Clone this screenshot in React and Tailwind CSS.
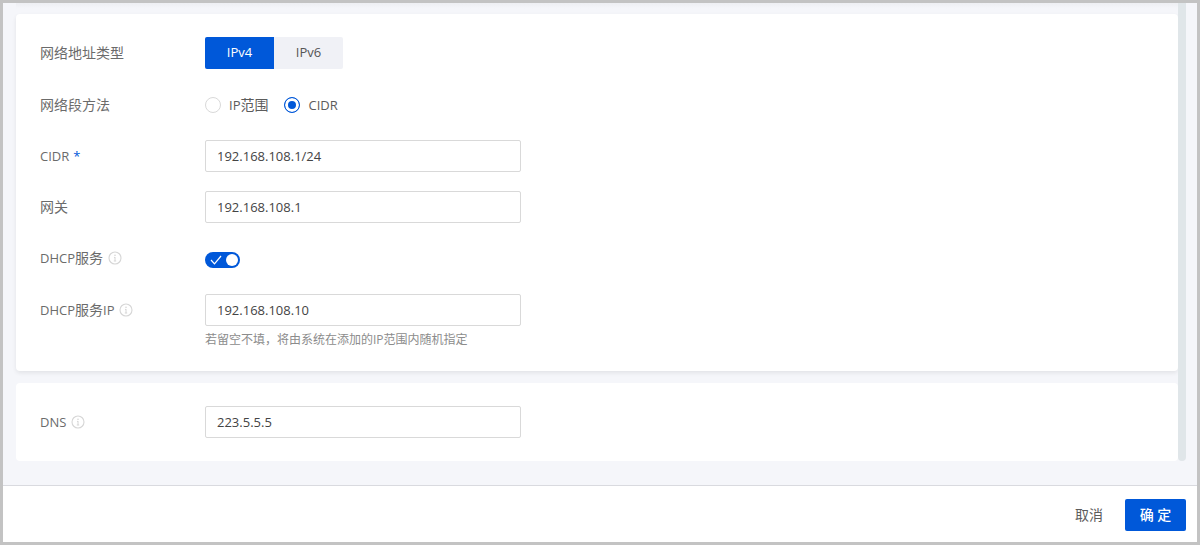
import React from 'react';

// Latin runs are set one step smaller than the Chinese text round them
function Latin({ children }) {
  return <span className="text-[13px]">{children}</span>;
}

function InfoIcon() {
  return (
    <svg viewBox="0 0 14 14" className="ml-[5px] w-3.5 h-3.5 shrink-0" fill="none" stroke="#d6d6d6" aria-hidden="true">
      <circle cx="7" cy="7" r="6" strokeWidth="1.1" />
      <path d="M7 6v4M6 6.4h1M5.8 10h2.4" strokeWidth="1" />
      <circle cx="7" cy="4.2" r="0.7" fill="#cccccc" stroke="none" />
    </svg>
  );
}

function Card({ children }) {
  return (
    <section className="rounded-sm bg-white px-6 shadow-[0_2px_4px_rgba(0,0,0,0.08)]">{children}</section>
  );
}

function Field({ id, label, info, required, className = '', children }) {
  return (
    <div className={`flex items-start ${className}`}>
      <div className="flex h-8 w-[165px] shrink-0 items-center text-[#6b6b6b]">
        <label htmlFor={id}>
          {label}
          {required && <span className="ml-1 text-[13px] text-[#0058d9]">*</span>}
        </label>
        {info && <InfoIcon />}
      </div>
      <div className="min-w-0 flex-1">{children}</div>
    </div>
  );
}

function TextInput({ id, value, onChange }) {
  return (
    <input id={id} type="text" value={value} onChange={(e) => onChange(e.target.value)}
      className="block h-8 w-full max-w-[316px] rounded-xs border border-[#d9d9d9] bg-white px-[11px] text-[13px] text-[#444] outline-none focus:border-[#0058d9]" />
  );
}

function TypeTabs({ value, onChange }) {
  return (
    <div className="inline-flex h-8 overflow-hidden rounded-xs bg-[#f0f1f6]" role="group" aria-label="网络地址类型">
      {['IPv4', 'IPv6'].map((t) => (
        <button key={t} type="button" aria-pressed={value === t} onClick={() => onChange(t)}
          className={`w-[69px] pb-0.5 text-[13px] ${value === t ? 'bg-[#0058d9] text-white' : 'text-[#555]'}`}>
          {t}
        </button>
      ))}
    </div>
  );
}

function Radio({ value, checked, onChange, children }) {
  return (
    <label className="flex items-center gap-2 text-[#5c5c5c]">
      <input type="radio" name="method" value={value} checked={checked} onChange={() => onChange(value)}
        className="h-4 w-4 appearance-none rounded-full border border-[#d9d9d9] bg-white checked:border-[#0058d9] checked:bg-[#0058d9] checked:shadow-[inset_0_0_0_3px_white]" />
      <span>{children}</span>
    </label>
  );
}

function Switch({ id, checked, onChange }) {
  return (
    <button id={id} type="button" role="switch" aria-checked={checked} onClick={() => onChange(!checked)}
      className={`flex h-4 w-[35px] items-center rounded-full px-0.5 ${checked ? 'justify-between bg-[#0058d9]' : 'justify-start bg-[#c3c3c3]'}`}>
      {checked && (
        <svg viewBox="0 0 12 10" className="ml-[3px] h-2.5 w-3" fill="none" stroke="white" strokeWidth="1.2" aria-hidden="true">
          <path d="M1 5l3.5 3.8L11 1" />
        </svg>
      )}
      <span className="h-3 w-3 rounded-full bg-white" />
    </button>
  );
}

export default function App() {
  const [type, setType] = React.useState('IPv4');
  const [method, setMethod] = React.useState('cidr');
  const [cidr, setCidr] = React.useState('192.168.108.1/24');
  const [gateway, setGateway] = React.useState('192.168.108.1');
  const [dhcp, setDhcp] = React.useState(true);
  const [dhcpIp, setDhcpIp] = React.useState('192.168.108.10');
  const [dns, setDns] = React.useState('223.5.5.5');

  return (
    <form onSubmit={(e) => e.preventDefault()}
      className="flex min-h-screen flex-col border-3 border-[#c3c3c3] bg-[#f5f6fa] font-['Open_Sans','Noto_Sans_CJK_SC',sans-serif] text-sm leading-5">
      <main className="flex flex-1 pr-[11px] pb-6 pl-[13px]">
        <div className="flex min-w-0 flex-1 flex-col">
          {/* lower edge of the card scrolled out above */}
          <div className="h-[11px] bg-linear-to-b from-[#eeeff3] to-[#f5f6fa] to-50%" />

          <div className="flex flex-col gap-3">
            <Card>
              <div className="pt-[23px] pb-[21px]">
                <Field label="网络地址类型" className="mb-5">
                  <TypeTabs value={type} onChange={setType} />
                </Field>
                <Field label="网络段方法" className="mb-[19px]">
                  <div className="flex h-8 items-center gap-4" role="radiogroup" aria-label="网络段方法">
                    <Radio value="range" checked={method === 'range'} onChange={setMethod}><Latin>IP</Latin>范围</Radio>
                    <Radio value="cidr" checked={method === 'cidr'} onChange={setMethod}><Latin>CIDR</Latin></Radio>
                  </div>
                </Field>
                <Field id="cidr" label={<Latin>CIDR</Latin>} required className="mb-[19px]">
                  <TextInput id="cidr" value={cidr} onChange={setCidr} />
                </Field>
                <Field id="gateway" label="网关" className="mb-[19px]">
                  <TextInput id="gateway" value={gateway} onChange={setGateway} />
                </Field>
                <Field id="dhcp" label={<><Latin>DHCP</Latin>服务</>} info className="mb-5">
                  <div className="flex h-8 items-center pt-1">
                    <Switch id="dhcp" checked={dhcp} onChange={setDhcp} />
                  </div>
                </Field>
                <Field id="dhcp-ip" label={<><Latin>DHCP</Latin>服务<Latin>IP</Latin></>} info>
                  <TextInput id="dhcp-ip" value={dhcpIp} onChange={setDhcpIp} />
                  <p className="mt-1 text-xs leading-5 text-[#8c8c8c]">若留空不填，将由系统在添加的IP范围内随机指定</p>
                </Field>
              </div>
            </Card>

            <section className="rounded-sm bg-white px-6 py-[23px]">
              <Field id="dns" label={<Latin>DNS</Latin>} info>
                <TextInput id="dns" value={dns} onChange={setDns} />
              </Field>
            </section>
          </div>
        </div>
        {/* scrollbar thumb */}
        <div className="w-2 shrink-0 rounded-b-sm bg-[#e0e6e9]" />
      </main>

      <footer className="flex items-center justify-end gap-[22px] border-t border-[#d9dadf] bg-white pt-[13px] pr-[11px] pb-[11px]">
        <button type="button" className="text-[#5c5c5c]">取消</button>
        <button type="submit" className="h-8 w-[61px] rounded-xs bg-[#0058d9] font-medium text-white">确 定</button>
      </footer>
    </form>
  );
}
